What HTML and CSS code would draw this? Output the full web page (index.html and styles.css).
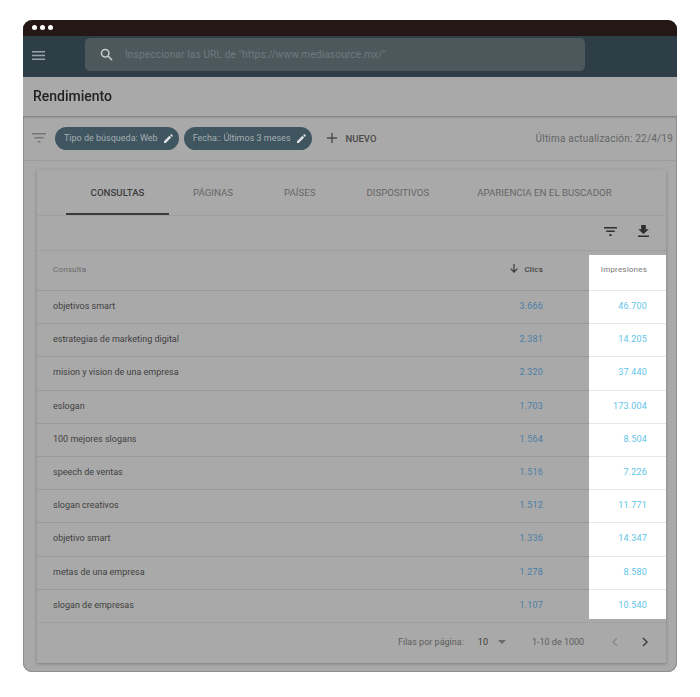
FILE: index.html
```html
<!DOCTYPE html>
<html lang="en">
<head>
  <meta charset="UTF-8" />
  <meta name="viewport" content="width=device-width, initial-scale=1.0"/>
  <title>Rendimiento</title>
  <link rel="stylesheet" href="styles.css">
</head>
<body>
  <div class="window">
    <div class="titlebar">
      <span class="dot"></span><span class="dot"></span><span class="dot"></span>
    </div>

    <!-- Top bar -->
    <div class="topbar">
      <svg class="menu-icon" width="13" height="9" viewBox="0 0 13 9"><path d="M0 0h13v1.5H0zM0 3.7h13v1.5H0zM0 7.5h13V9H0z" fill="#98a3a8"/></svg>
      <div class="search">
        <svg width="13" height="13" viewBox="0 0 14 14" fill="none" stroke="#c3c8ca" stroke-width="1.7"><circle cx="5.6" cy="5.6" r="4"/><path d="M8.6 8.6L13 13"/></svg>
        <span class="search-text">Inspeccionar las URL de "https://www.mediasource.mx/"</span>
      </div>
    </div>

    <div class="page-title">Rendimiento</div>

    <!-- Filters -->
    <div class="filters">
      <svg class="filter-icon" width="14" height="10" viewBox="0 0 14 10"><path d="M0 0h14v1.4H0zM2.5 4h9v1.4h-9zM5.7 8h2.6v1.6H5.7z" fill="#767676"/></svg>
      <div class="chip">Tipo de búsqueda: Web
        <svg width="9" height="9" viewBox="0 0 10 10"><path d="M0 10V8l6-6 2 2-6 6zM6.8 1.2L8 0l2 2-1.2 1.2z" fill="#dfe3e5"/></svg>
      </div>
      <div class="chip">Fecha:: Últimos 3 meses
        <svg width="9" height="9" viewBox="0 0 10 10"><path d="M0 10V8l6-6 2 2-6 6zM6.8 1.2L8 0l2 2-1.2 1.2z" fill="#dfe3e5"/></svg>
      </div>
      <svg class="plus" width="10" height="10" viewBox="0 0 10 10"><path d="M4.3 0h1.4v10H4.3zM0 4.3h10v1.4H0z" fill="#4c4c4c"/></svg>
      <span class="new">NUEVO</span>
      <span class="updated">Última actualización: 22/4/19</span>
    </div>

    <div class="card">
      <div class="tabs">
        <div class="tab active">CONSULTAS</div>
        <div class="tab tab-pages">PÁGINAS</div>
        <div class="tab tab-countries">PAÍSES</div>
        <div class="tab tab-devices">DISPOSITIVOS</div>
        <div class="tab tab-search">APARIENCIA EN EL BUSCADOR</div>
      </div>

      <div class="toolbar">
        <svg width="13" height="9" viewBox="0 0 13 9"><path d="M0 0h13v1.4H0zM2.3 3.6h8.4V5H2.3zM5.3 7.3h2.4V9H5.3z" fill="#2f2f2f"/></svg>
        <svg width="11" height="12" viewBox="0 0 11 12"><path d="M3.2 0h4.6v4.2h3L5.5 9 .2 4.2h3zM0 10.6h11V12H0z" fill="#2f2f2f"/></svg>
      </div>

      <div class="row head">
        <div class="name">Consulta</div>
        <div class="clicks"><svg width="8" height="9" viewBox="0 0 8 9"><path d="M3.4 0h1.2v6.6L7 4.3l.8.8L4 9 .2 5.1l.8-.8 2.4 2.3z" fill="#3a3a3a"/></svg>Clics</div>
        <div class="impr">Impresiones</div>
      </div>

      <div class="row"><div class="name">objetivos smart</div><div class="clicks">3.666</div><div class="impr">46.700</div></div>
      <div class="row"><div class="name">estrategias de marketing digital</div><div class="clicks">2.381</div><div class="impr">14.205</div></div>
      <div class="row"><div class="name">mision y vision de una empresa</div><div class="clicks">2.320</div><div class="impr">37.440</div></div>
      <div class="row"><div class="name">eslogan</div><div class="clicks">1.703</div><div class="impr">173.004</div></div>
      <div class="row"><div class="name">100 mejores slogans</div><div class="clicks">1.564</div><div class="impr">8.504</div></div>
      <div class="row"><div class="name">speech de ventas</div><div class="clicks">1.516</div><div class="impr">7.226</div></div>
      <div class="row"><div class="name">slogan creativos</div><div class="clicks">1.512</div><div class="impr">11.771</div></div>
      <div class="row"><div class="name">objetivo smart</div><div class="clicks">1.336</div><div class="impr">14.347</div></div>
      <div class="row"><div class="name">metas de una empresa</div><div class="clicks">1.278</div><div class="impr">8.580</div></div>
      <div class="row last"><div class="name">slogan de empresas</div><div class="clicks">1.107</div><div class="impr">10.540</div></div>

      <div class="pager">
        <span class="pager-label">Filas por página:</span>
        <span class="pager-size">10</span>
        <svg class="caret" width="8" height="4" viewBox="0 0 8 4"><path d="M0 0h8L4 4z" fill="#6a6a6a"/></svg>
        <span class="pager-range">1-10 de 1000</span>
        <svg class="prev" width="6" height="10" viewBox="0 0 6 10" fill="none" stroke="#8a8a8a" stroke-width="1.5"><path d="M5 1L1 5l4 4"/></svg>
        <svg class="next" width="6" height="10" viewBox="0 0 6 10" fill="none" stroke="#3f3f3f" stroke-width="1.5"><path d="M1 1l4 4-4 4"/></svg>
      </div>
    </div>
  </div>
</body>
</html>
```

FILE: styles.css
```css
body {
  margin: 0;
  background-color: #fff;
  font-family: Roboto, sans-serif;
  color: #444;
}
.window {
  width: 654px;
  height: 652px;
  margin: 20px 0 0 23px;
  background: #a9a9a9;
  border-radius: 9px;
  overflow: hidden;
  box-shadow: inset -1px 0 0 #8f8f8f, inset 1px 0 0 #8f8f8f, inset 0 -1px 0 #8f8f8f;
  filter: blur(0.45px);
}
.titlebar {
  height: 16px;
  background: #231815;
  display: flex;
  align-items: center;
  gap: 3px;
  padding-left: 9px;
  padding-bottom: 2px;
  box-sizing: border-box;
}
.dot {
  width: 5px;
  height: 5px;
  border-radius: 50%;
  background: #fff;
}
.topbar {
  height: 41px;
  background: #2e3e46;
  display: flex;
  align-items: flex-start;
  box-sizing: border-box;
  padding: 2px 0 0 9px;
}
.menu-icon {
  margin-top: 13px;
}
.search {
  margin-left: 40px;
  width: 500px;
  height: 33px;
  background: #4d585d;
  border-radius: 5px;
  display: flex;
  align-items: center;
  padding-left: 15px;
  box-sizing: border-box;
  gap: 12px;
}
.search-text {
  font-size: 10.2px;
  color: #6f7a7f;
  letter-spacing: 0.1px;
}
.page-title {
  height: 39px;
  line-height: 39px;
  padding-left: 10px;
  font-size: 14px;
  font-weight: 500;
  color: #222;
  background: #a9a9a9;
  box-shadow: 0 1px 2px #777;
  position: relative;
}
.filters {
  height: 45px;
  display: flex;
  align-items: center;
  padding-left: 9px;
  border-bottom: 1px solid #9d9d9d;
  box-sizing: border-box;
}
.chip {
  height: 23px;
  background: #3f5560;
  color: #a5aeb2;
  border-radius: 12px;
  font-size: 9px;
  display: flex;
  align-items: center;
  padding: 0 6px 0 9px;
  gap: 6px;
  margin-left: 5px;
}
.filter-icon {
  margin-right: 4px;
}
.plus {
  margin-left: 15px;
}
.new {
  font-size: 9.5px;
  font-weight: 500;
  margin-left: 9px;
  color: #4a4a4a;
}
.updated {
  margin-left: auto;
  margin-right: 4px;
  font-size: 10px;
  color: #666;
  letter-spacing: 0.2px;
}
.card {
  width: 629px;
  margin: 9px 0 0 14px;
  background: #a9a9a9;
  box-shadow: 0 1px 3px #7c7c7c;
}
.tabs {
  height: 46px;
  display: flex;
  border-bottom: 1px solid #9f9f9f;
  box-sizing: border-box;
  padding-left: 29px;
  font-size: 9.7px;
  color: #666;
}
.tab {
  height: 45px;
  line-height: 45px;
  box-sizing: border-box;
}
.tab.active {
  width: 103px;
  text-align: center;
  font-weight: 500;
  color: #3d3d3d;
  border-bottom: 2px solid #3a3a3a;
}
.tab-pages { margin-left: 24px; }
.tab-countries { margin-left: 51px; }
.tab-devices { margin-left: 51px; }
.tab-search { margin-left: 48px; }
.toolbar {
  height: 35px;
  display: flex;
  align-items: center;
  justify-content: flex-end;
  gap: 21px;
  padding: 0 17px 4px 0;
  box-sizing: border-box;
  border-bottom: 1px solid #9f9f9f;
}
.row {
  height: 33.2px;
  display: flex;
  align-items: center;
  border-bottom: 1px solid #999;
  box-sizing: border-box;
  font-size: 9px;
  color: #404040;
}
.name {
  flex: 1;
  padding: 0 0 2px 16px;
}
.clicks {
  width: 80px;
  text-align: right;
  padding: 0 46px 2px 0;
  box-sizing: border-box;
  color: #4b7fa6;
  letter-spacing: 0.2px;
}
.impr {
  width: 77px;
  height: calc(100% + 1px);
  align-self: flex-start;
  line-height: 30px;
  text-align: right;
  padding-right: 19px;
  box-sizing: border-box;
  background: #fff;
  color: #62c4e8;
  border-bottom: 1px solid #e6e6e6;
  letter-spacing: 0.2px;
}
.head {
  height: 40px;
  font-size: 8px;
  color: #6a6a6a;
}
.head .name {
  line-height: 42px;
  letter-spacing: 0.2px;
}
.head .clicks {
  line-height: 42px;
  font-weight: 500;
  color: #444;
  display: flex;
  align-items: center;
  justify-content: flex-end;
  gap: 6px;
}
.head .clicks svg {
  margin-top: -2px;
}
.head .impr {
  height: 36px;
  margin-top: 4px;
  line-height: 30px;
  color: #777;
}
.last {
  border-bottom: 1px solid #9f9f9f;
}
.last .impr {
  height: 29px;
  border-bottom: 0;
}
.pager {
  height: 40px;
  display: flex;
  align-items: center;
  font-size: 9px;
  color: #5c5c5c;
  padding: 0 0 2px 361px;
  box-sizing: border-box;
}
.pager-size {
  margin-left: 14px;
  color: #404040;
}
.pager .caret {
  margin-left: 10px;
}
.pager-range {
  margin-left: 26px;
}
.pager .prev {
  margin-left: 28px;
}
.pager .next {
  margin-left: 24px;
}
```
